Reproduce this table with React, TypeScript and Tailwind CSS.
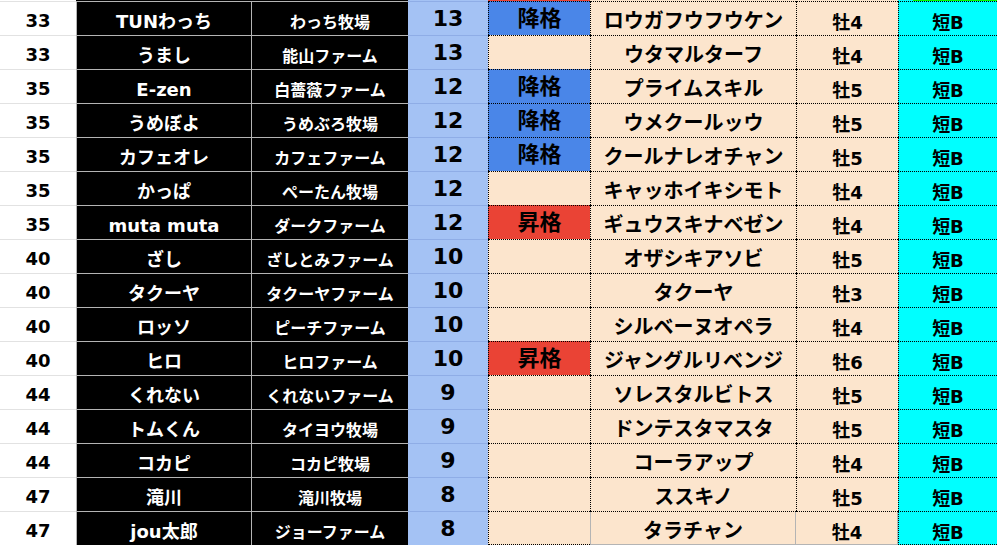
const rows: [string, string, string, string, string, string, string][] = [
  ['33', 'TUNわっち', 'わっち牧場', '13', '降格', 'ロウガフウフウケン', '牡4'],
  ['33', 'うまし', '能山ファーム', '13', '', 'ウタマルターフ', '牡4'],
  ['35', 'E-zen', '白薔薇ファーム', '12', '降格', 'プライムスキル', '牡5'],
  ['35', 'うめぼよ', 'うめぶろ牧場', '12', '降格', 'ウメクールッウ', '牡5'],
  ['35', 'カフェオレ', 'カフェファーム', '12', '降格', 'クールナレオチャン', '牡5'],
  ['35', 'かっぱ', 'ぺーたん牧場', '12', '', 'キャッホイキシモト', '牡4'],
  ['35', 'muta muta', 'ダークファーム', '12', '昇格', 'ギュウスキナベゼン', '牡4'],
  ['40', 'ざし', 'ざしとみファーム', '10', '', 'オザシキアソビ', '牡5'],
  ['40', 'タクーヤ', 'タクーヤファーム', '10', '', 'タクーヤ', '牡3'],
  ['40', 'ロッソ', 'ピーチファーム', '10', '', 'シルベーヌオペラ', '牡4'],
  ['40', 'ヒロ', 'ヒロファーム', '10', '昇格', 'ジャングルリベンジ', '牡6'],
  ['44', 'くれない', 'くれないファーム', '9', '', 'ソレスタルビトス', '牡5'],
  ['44', 'トムくん', 'タイヨウ牧場', '9', '', 'ドンテスタマスタ', '牡5'],
  ['44', 'コカピ', 'コカピ牧場', '9', '', 'コーラアップ', '牡4'],
  ['47', '滝川', '滝川牧場', '8', '', 'ススキノ', '牡5'],
  ['47', 'jou太郎', 'ジョーファーム', '8', '', 'タラチャン', '牡4'],
]

const font = { fontFamily: '"DejaVu Sans", "Noto Sans CJK JP", sans-serif' }

export default function App() {
  return (
    <div className="w-[997px] h-[546px] overflow-hidden bg-white font-bold" style={font}>
      {/* sliver of the row above */}
      <div className="flex h-px">
        <div className="w-[76px] bg-white" />
        <div className="w-[332px] bg-black" />
        <div className="w-[80px] bg-[#a4c2f4]" />
        <div className="w-[102px] bg-[#ea4335]" />
        <div className="w-[308px] bg-[#fce5cd]" />
        <div className="w-[15px] bg-[#00ffff]" />
        <div className="w-[84px] bg-[#00ff00]" />
      </div>

      {rows.map((r, i) => {
        const last = i === rows.length - 1
        const status =
          r[4] === '降格' ? 'bg-[#4a86e8]' : r[4] === '昇格' ? 'bg-[#ea4335]' : 'bg-[#fce5cd]'
        return (
          <div key={i} className="flex h-[34px]">
            <div className="w-[76px] flex items-center justify-center pt-[3px] border-t border-[#e2e2e2] text-[18px] text-black">
              {r[0]}
            </div>
            <div className="w-[175px] flex items-center justify-center pt-[5px] border-t border-l border-[#b4b4b4] bg-black text-white text-[18px]">
              {r[1]}
            </div>
            <div className="w-[157px] flex items-center justify-center pt-[9px] border-t border-l border-[#b4b4b4] bg-black text-white text-[16px]">
              {r[2]}
            </div>
            <div className="w-[80px] flex items-center justify-center border-t border-[#8fade6] bg-[#a4c2f4] text-black text-[22px]">
              {r[3]}
            </div>
            <div
              className={`w-[102px] flex items-center justify-center border-t border-l border-dotted border-black text-black text-[22px] ${status} ${last ? 'border-b' : ''}`}
            >
              {r[4]}
            </div>
            {last ? (
              <>
                <div className="w-[206px] flex items-center justify-center pt-[4px] border-t border-t-black border-dotted bg-[#fce5cd] text-black text-[20px] relative">
                  <div className="absolute inset-0 border-l border-r border-b border-solid border-[#b4b4b4]" />
                  {r[5]}
                </div>
                <div className="w-[102px] flex items-center justify-center pt-[8px] border-t border-t-black border-dotted bg-[#fce5cd] text-black text-[18px] relative">
                  <div className="absolute inset-0 border-r border-b border-solid border-[#b4b4b4]" />
                  {r[6]}
                </div>
              </>
            ) : (
              <>
                <div className="w-[206px] flex items-center justify-center pt-[4px] border-t border-l border-dotted border-black bg-[#fce5cd] text-black text-[20px]">
                  {r[5]}
                </div>
                <div className="w-[102px] flex items-center justify-center pt-[8px] border-t border-l border-dotted border-black bg-[#fce5cd] text-black text-[18px]">
                  {r[6]}
                </div>
              </>
            )}
            <div
              className={`w-[99px] flex items-center justify-center pt-[8px] border-t border-l border-dotted border-black bg-[#00ffff] text-black text-[18px] ${last ? 'border-b' : ''}`}
            >
              短B
            </div>
          </div>
        )
      })}
    </div>
  )
}
